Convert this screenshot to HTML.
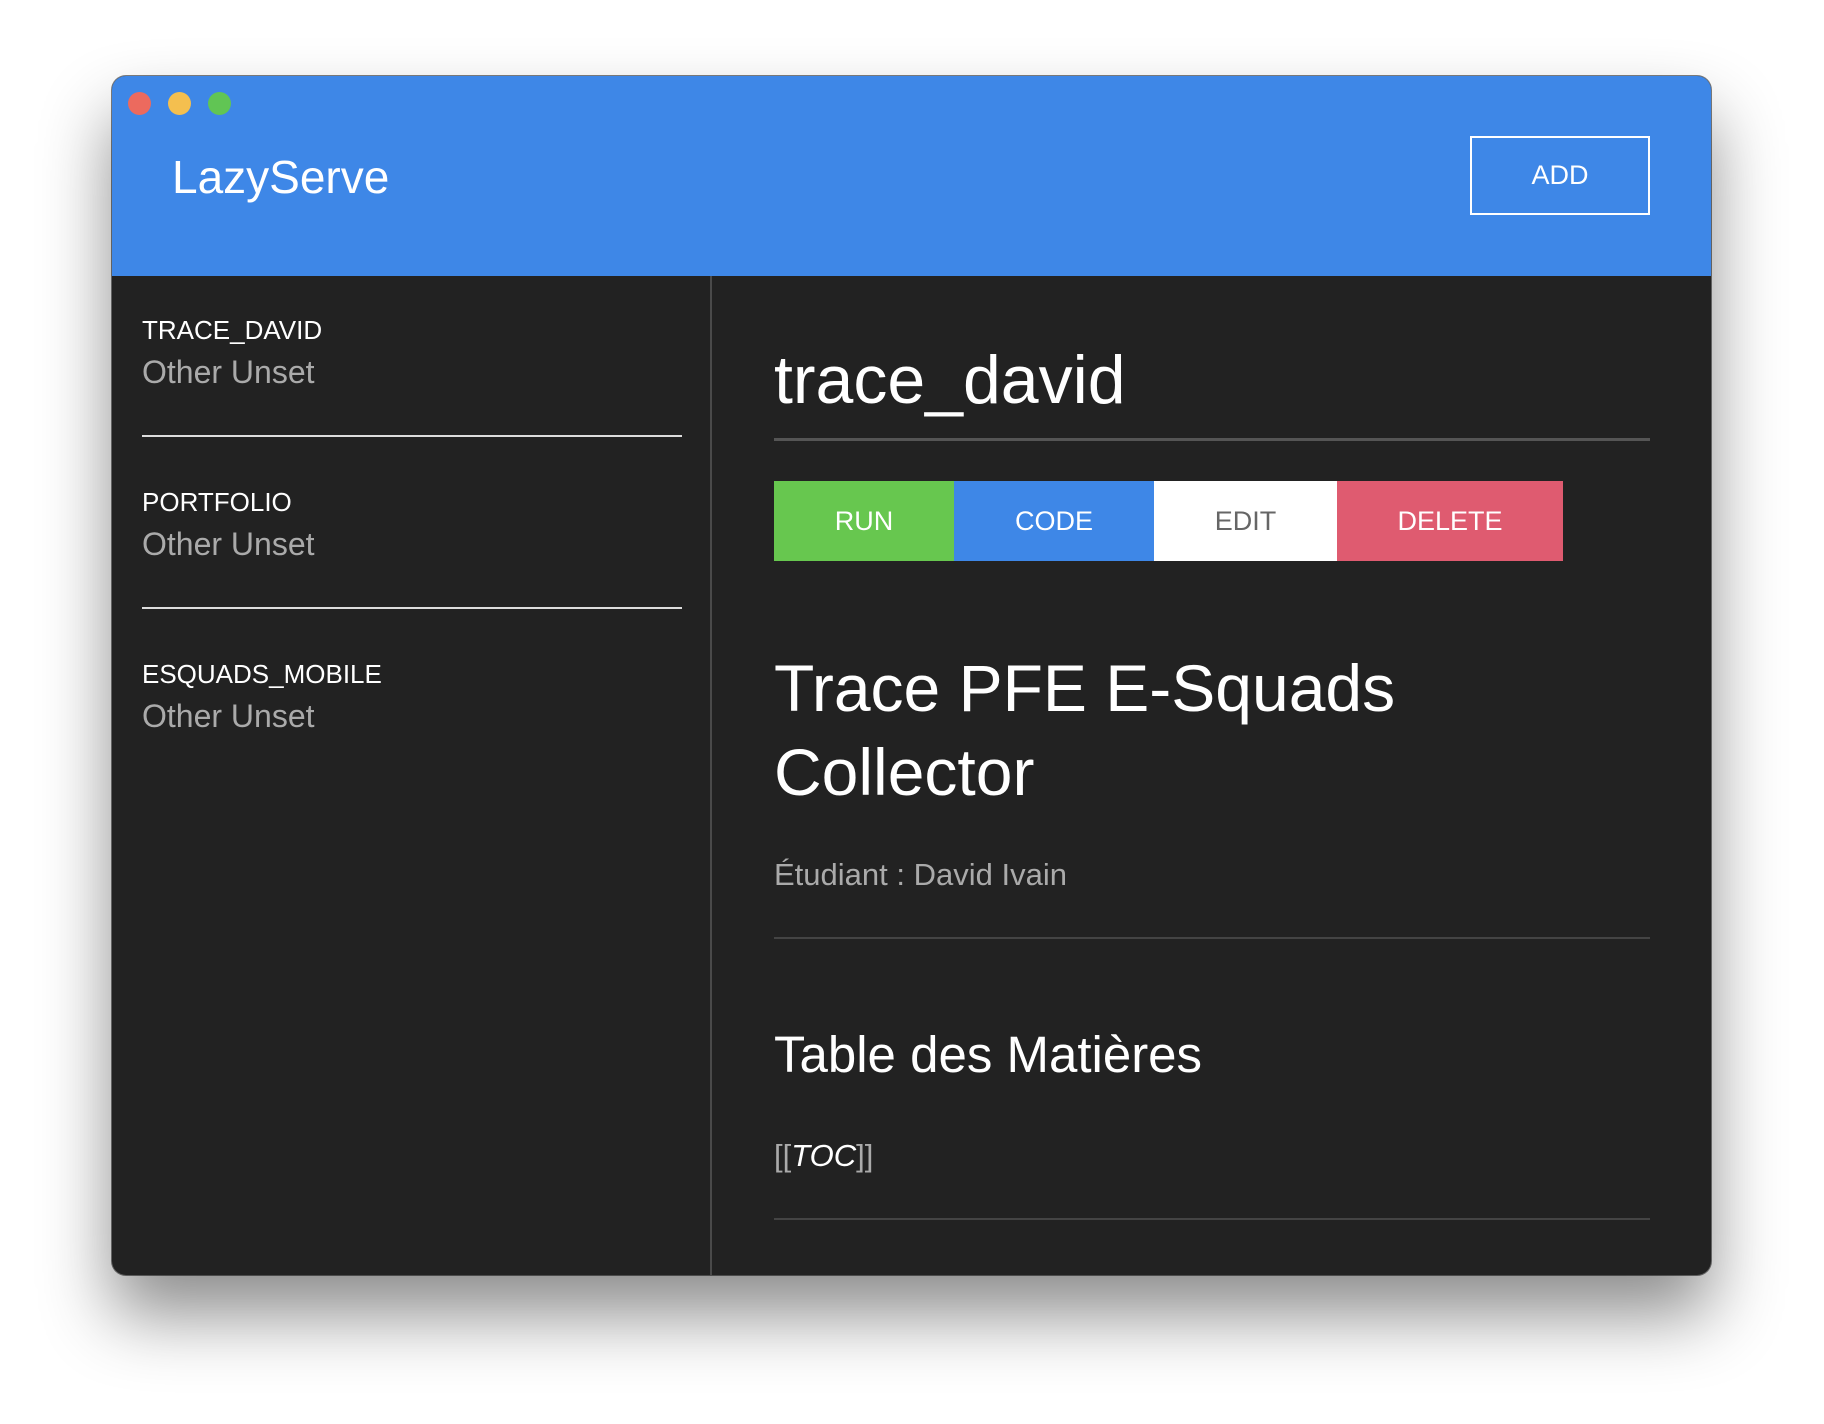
<!DOCTYPE html>
<html><head><meta charset="utf-8"><style>
*{margin:0;padding:0;box-sizing:border-box}
body{width:1824px;height:1424px;background:#fff;font-family:"Liberation Sans",sans-serif;position:relative;overflow:hidden}
.win{position:absolute;left:112px;top:76px;width:1599px;height:1199px;border-radius:14px;overflow:hidden;background:#222;box-shadow:0 40px 70px rgba(0,0,0,.45),0 0 0 1px rgba(0,0,0,.5)}
.hdr{position:absolute;left:0;top:0;width:100%;height:200px;background:#3e87e7}
.dot{position:absolute;top:16px;width:23px;height:23px;border-radius:50%}
.a{position:absolute;white-space:nowrap}
.logo{left:60px;top:74px;font-size:46px;color:#fff}
.add{position:absolute;left:1358px;top:60px;width:180px;height:79px;border:2px solid #fff;color:#fff;font-size:27px;display:flex;align-items:center;justify-content:center}
.side{position:absolute;left:0;top:200px;width:600px;bottom:0;border-right:2px solid #4a4a4a}
.t{left:30px;font-size:26px;color:#fff}
.s{left:30px;font-size:32px;color:#aaa}
.sep{position:absolute;left:30px;width:540px;height:2px;background:#ddd}
.m{left:662px}
.hr{position:absolute;left:662px;width:876px}
.btn{position:absolute;top:405px;height:80px;display:flex;align-items:center;justify-content:center;font-size:27px;color:#fff}
</style></head><body>
<div class="win">
<div class="hdr">
<div class="dot" style="left:16px;background:#ec6a5e"></div>
<div class="dot" style="left:56px;background:#f4bf4f"></div>
<div class="dot" style="left:96px;background:#61c554"></div>
<div class="a logo">LazyServe</div>
<div class="add">ADD</div>
</div>
<div class="side">
<div class="a t" style="top:39px">TRACE_DAVID</div>
<div class="a s" style="top:78px">Other Unset</div>
<div class="sep" style="top:159px"></div>
<div class="a t" style="top:211px">PORTFOLIO</div>
<div class="a s" style="top:250px">Other Unset</div>
<div class="sep" style="top:331px"></div>
<div class="a t" style="top:383px">ESQUADS_MOBILE</div>
<div class="a s" style="top:422px">Other Unset</div>
</div>
<div class="a m" style="top:265px;font-size:68px;color:#fff">trace_david</div>
<div class="hr" style="top:362px;height:3px;background:#555"></div>
<div class="btn" style="left:662px;width:180px;background:#67c74f">RUN</div>
<div class="btn" style="left:842px;width:200px;background:#3e87e7">CODE</div>
<div class="btn" style="left:1042px;width:183px;background:#fff;color:#666">EDIT</div>
<div class="btn" style="left:1225px;width:226px;background:#df5b70">DELETE</div>
<div class="a m" style="top:570px;font-size:66px;line-height:84px;color:#fff">Trace PFE E-Squads<br>Collector</div>
<div class="a m" style="top:781px;font-size:31px;color:#aaa">Étudiant : David Ivain</div>
<div class="hr" style="top:861px;height:2px;background:#444"></div>
<div class="a m" style="top:949px;font-size:51px;color:#fff">Table des Matières</div>
<div class="a m" style="top:1062px;font-size:31px;color:#aaa">[[<i style="color:#fff">TOC</i>]]</div>
<div class="hr" style="top:1142px;height:2px;background:#444"></div>
</div>
</body></html>
